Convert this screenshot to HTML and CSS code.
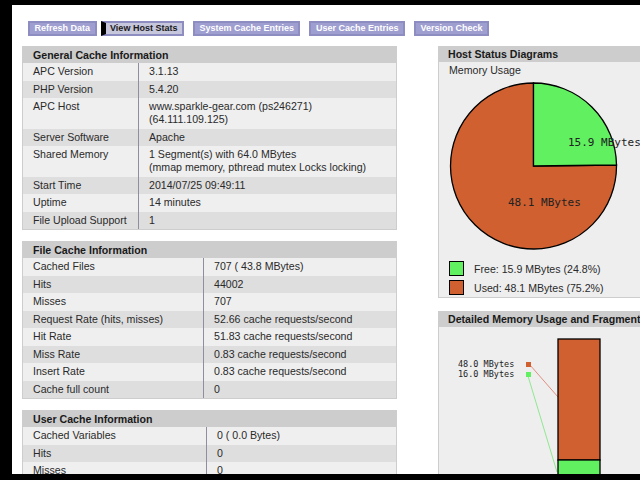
FILE: index.html
```html
<!DOCTYPE html>
<html lang="en">
<head>
    <meta charset="UTF-8">
    <meta name="viewport" content="width=device-width, initial-scale=1.0">
    <title>APC INFO</title>
    <link rel="stylesheet" href="styles.css">
</head>
<body>

    <div class="screen">
        <ol class="menu">
            <li><a href="#">Refresh Data</a></li>
            <li><span class="active">View Host Stats</span></li>
            <li><a href="#">System Cache Entries</a></li>
            <li><a href="#">User Cache Entries</a></li>
            <li><a href="#">Version Check</a></li>
        </ol>

        <div class="content">
            <div class="left">
                <div class="info general">
                    <h2>General Cache Information</h2>
                    <table>
                        <tr class="tr-0"><td class="td-0">APC Version</td><td>3.1.13</td></tr>
                        <tr class="tr-1"><td class="td-0">PHP Version</td><td>5.4.20</td></tr>
                        <tr class="tr-0"><td class="td-0">APC Host</td><td>www.sparkle-gear.com (ps246271)<br>(64.111.109.125)</td></tr>
                        <tr class="tr-1"><td class="td-0">Server Software</td><td>Apache</td></tr>
                        <tr class="tr-0"><td class="td-0">Shared Memory</td><td>1 Segment(s) with 64.0 MBytes<br>(mmap memory, pthread mutex Locks locking)</td></tr>
                        <tr class="tr-1"><td class="td-0">Start Time</td><td>2014/07/25 09:49:11</td></tr>
                        <tr class="tr-0"><td class="td-0">Uptime</td><td>14 minutes</td></tr>
                        <tr class="tr-1"><td class="td-0">File Upload Support</td><td>1</td></tr>
                    </table>
                </div>

                <div class="info file">
                    <h2>File Cache Information</h2>
                    <table>
                        <tr class="tr-0"><td class="td-0">Cached Files</td><td>707 ( 43.8 MBytes)</td></tr>
                        <tr class="tr-1"><td class="td-0">Hits</td><td>44002</td></tr>
                        <tr class="tr-0"><td class="td-0">Misses</td><td>707</td></tr>
                        <tr class="tr-1"><td class="td-0">Request Rate (hits, misses)</td><td>52.66 cache requests/second</td></tr>
                        <tr class="tr-0"><td class="td-0">Hit Rate</td><td>51.83 cache requests/second</td></tr>
                        <tr class="tr-1"><td class="td-0">Miss Rate</td><td>0.83 cache requests/second</td></tr>
                        <tr class="tr-0"><td class="td-0">Insert Rate</td><td>0.83 cache requests/second</td></tr>
                        <tr class="tr-1"><td class="td-0">Cache full count</td><td>0</td></tr>
                    </table>
                </div>

                <div class="info user">
                    <h2>User Cache Information</h2>
                    <table>
                        <tr class="tr-0"><td class="td-0">Cached Variables</td><td>0 ( 0.0 Bytes)</td></tr>
                        <tr class="tr-1"><td class="td-0">Hits</td><td>0</td></tr>
                        <tr class="tr-0"><td class="td-0">Misses</td><td>0</td></tr>
                    </table>
                </div>
            </div>

            <div class="right">
                <div class="graph">
                    <h2>Host Status Diagrams</h2>
                    <div class="graph-body">
                        <div class="graph-title">Memory Usage</div>
                        <svg class="pie" width="200" height="180" viewBox="0 0 200 180">
                            <path d="M84.5 87 L167.5 86 A83 83 0 1 1 84.5 4 Z" fill="#d06030" stroke="#000" stroke-width="1.3"/>
                            <path d="M84.5 87 L84.5 4 A83 83 0 0 1 167.5 86 Z" fill="#60f060" stroke="#000" stroke-width="1.3"/>
                            <text x="119" y="67" class="chart-text">15.9 MBytes</text>
                            <text x="59" y="127" class="chart-text">48.1 MBytes</text>
                        </svg>
                        <div class="legend-row"><span class="swatch free"></span>Free: 15.9 MBytes (24.8%)</div>
                        <div class="legend-row"><span class="swatch used"></span>Used: 48.1 MBytes (75.2%)</div>
                    </div>
                </div>

                <div class="graph">
                    <h2>Detailed Memory Usage and Fragmentation</h2>
                    <div class="graph-body frag">
                        <svg width="300" height="170" viewBox="0 0 300 170">
                            <text x="19" y="40" class="chart-small">48.0 MBytes</text>
                            <text x="19" y="50" class="chart-small">16.0 MBytes</text>
                            <line x1="91" y1="38" x2="119" y2="70" stroke="#e09080" stroke-width="1"/>
                            <line x1="89" y1="49" x2="118" y2="145" stroke="#90e890" stroke-width="1"/>
                            <rect x="87" y="35" width="5" height="5" fill="#d06030"/>
                            <rect x="87" y="45" width="5" height="5" fill="#60f060"/>
                            <rect x="119" y="12" width="42" height="121" fill="#d06030" stroke="#000" stroke-width="1.3"/>
                            <rect x="119" y="133" width="42" height="60" fill="#60f060" stroke="#000" stroke-width="1.3"/>
                        </svg>
                    </div>
                </div>
            </div>
        </div>
    </div>

</body>
</html>
```

FILE: styles.css
```css
body {
    margin: 0;
    height: 480px;
    overflow: hidden;
    background-color: #000;
    font-family: "Liberation Sans", Arial, sans-serif;
    font-size: 10.6px;
    color: #2a2a2a;
}

.screen {
    margin: 5px 0 0 12px;
    height: 469px;
    padding: 16px 0 0 10px;
    box-sizing: border-box;
    background-color: #fff;
    overflow: hidden;
}

/* top menu */
.menu {
    display: flex;
    margin: 0 0 10px;
    padding: 0 0 0 1px;
    list-style: none;
}

.menu li {
    margin-right: 4px;
    font-size: 9px;
    font-weight: bold;
}

.menu a,
.menu .active {
    display: block;
    margin-left: 5px;
    padding: 0 4.5px;
    line-height: 11px;
    border: 2px solid #8d8dc2;
    background-color: #9e9ed0;
    color: #fff;
    text-decoration: none;
    white-space: nowrap;
}

.menu .active {
    margin-left: 0;
    border-left: 5px solid #000;
    background-color: #c6c6dd;
    color: #1a1a1a;
}

.content {
    display: flex;
    gap: 41px;
}

.left {
    flex: none;
    width: 375px;
}

.right {
    flex: none;
    width: 580px;
}

/* info tables */
.info {
    margin-bottom: 11px;
    border: 1px solid #cdcdcd;
    background-color: #cdcdcd;
}

.info h2,
.graph h2 {
    margin: 0;
    padding: 0 10px;
    font-size: 10.6px;
    line-height: 16px;
    background-color: #cdcdcd;
    color: #1a1a1a;
}

.info table {
    width: 100%;
    border-spacing: 0;
    table-layout: fixed;
}

.info td {
    padding: 2px 10px 2.5px;
    line-height: 13px;
    vertical-align: top;
    white-space: nowrap;
}

.info .td-0 {
    box-sizing: border-box;
    border-right: 1px solid #8e8e9e;
}

.general .td-0 { width: 116px; }
.file .td-0 { width: 181px; }
.user .td-0 { width: 184px; }

.tr-0 { background-color: #efefef; }
.tr-1 { background-color: #dedede; }

/* graphs */
.graph {
    margin-bottom: 13px;
}

.graph-body {
    padding: 1px 10px 0;
    border: 1px solid #cdcdcd;
    border-top: none;
    background-color: #eeeeee;
}

.graph-title {
    line-height: 14px;
}

.pie {
    display: block;
    margin-top: 2px;
}

.chart-text {
    font-family: "DejaVu Sans Mono", monospace;
    font-size: 11px;
    fill: #222;
}

.chart-small {
    font-family: "DejaVu Sans Mono", monospace;
    font-size: 8.5px;
    fill: #222;
}

.legend-row {
    display: flex;
    align-items: center;
    height: 19px;
}

.swatch {
    width: 13px;
    height: 13px;
    margin-right: 10px;
    border: 1px solid #000;
}

.swatch.free { background-color: #60f060; }
.swatch.used { background-color: #d06030; }

.graph-body.frag {
    padding: 0;
    height: 200px;
}

.frag svg {
    display: block;
}
```
